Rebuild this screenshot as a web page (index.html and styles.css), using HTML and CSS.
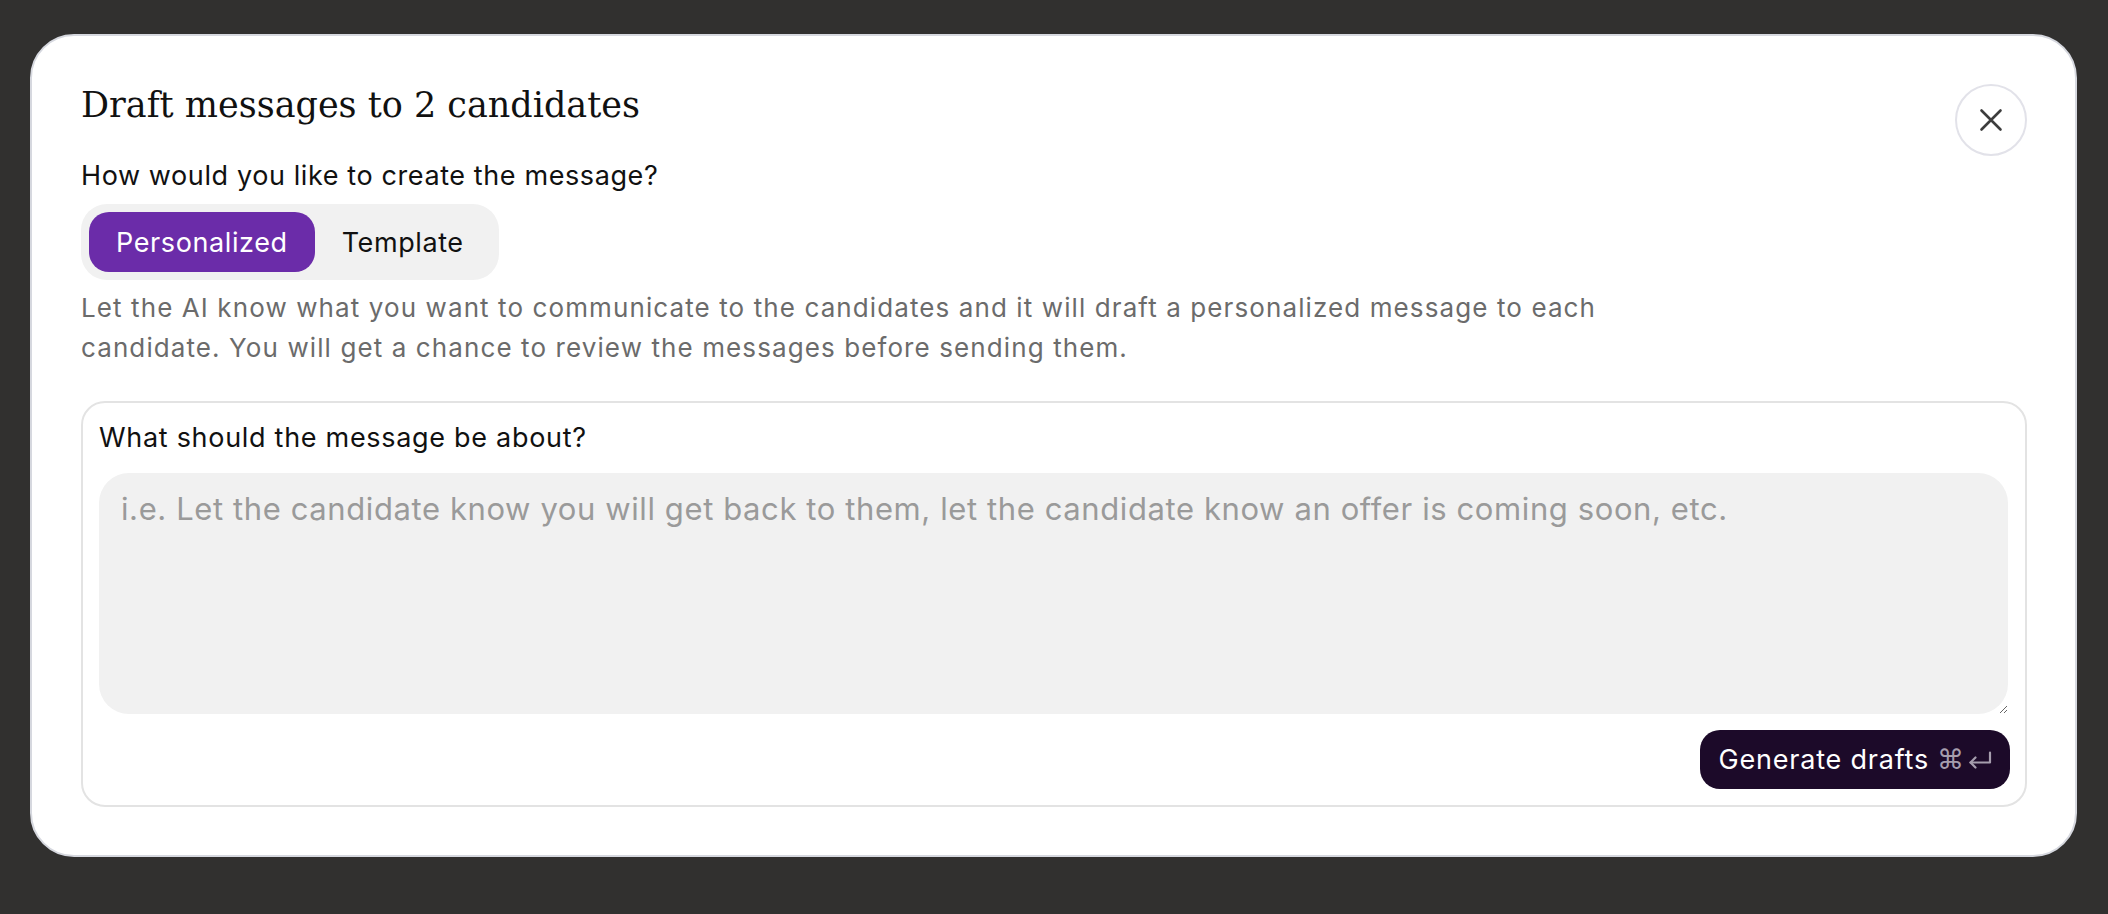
FILE: index.html
```html
<!DOCTYPE html>
<html lang="en">
<head>
<meta charset="utf-8">
<title>Draft messages</title>
<link rel="stylesheet" href="styles.css">
</head>
<body>
<div class="overlay">
  <div class="modal">
    <div class="header">
      <h1 class="title">Draft messages to 2 candidates</h1>
      <button class="close" aria-label="Close">
        <svg width="24" height="24" viewBox="0 0 24 24" fill="none" stroke="#3d3d3d" stroke-width="2.6" stroke-linecap="round"><path d="M2.5 2.5 L21.5 21.5 M21.5 2.5 L2.5 21.5"/></svg>
      </button>
    </div>
    <p class="question">How would you like to create the message?</p>
    <div class="segmented">
      <button class="seg active">Personalized</button>
      <button class="seg">Template</button>
    </div>
    <p class="desc">Let the AI know what you want to communicate to the candidates and it will draft a personalized message to each candidate. You will get a chance to review the messages before sending them.</p>
    <div class="card">
      <label class="card-label" for="about">What should the message be about?</label>
      <textarea id="about" class="input" placeholder="i.e. Let the candidate know you will get back to them, let the candidate know an offer is coming soon, etc."></textarea>
      <button class="generate">Generate drafts <span class="keys"><span class="cmd">⌘</span><svg width="24" height="18" viewBox="0 0 24 18" fill="none" stroke="#a59dad" stroke-width="2.2" stroke-linecap="round" stroke-linejoin="round"><path d="M22 1.5 V11.5 H2.5"/><path d="M7.5 6.5 L2.5 11.5 L7.5 16.5"/></svg></span></button>
    </div>
  </div>
</div>
</body>
</html>
```
FILE: styles.css
```css
* { box-sizing: border-box; }
html, body { margin: 0; padding: 0; }
body {
  background: #31302f;
  height: 914px;
  font-family: Inter, "Noto Sans", sans-serif;
  color: #111;
}
.overlay {
  padding: 34px 31px 0 30px;
}
.modal {
  background: #fff;
  border: 2px solid #d6d8df;
  border-radius: 44px;
  height: 823px;
  padding: 48px 48px 0 49px;
}
.header {
  display: flex;
  justify-content: space-between;
  align-items: flex-start;
}
.title {
  margin: 0;
  font-family: "DejaVu Serif", "Liberation Serif", serif;
  font-weight: 400;
  font-size: 35px;
  line-height: 42px;
  color: #111;
}
.close {
  width: 72px;
  height: 72px;
  border-radius: 50%;
  border: 2px solid #e2e2e9;
  background: #fff;
  display: flex;
  align-items: center;
  justify-content: center;
  padding: 0;
}
.question {
  margin: 4px 0 0;
  font-size: 27px;
  line-height: 32px;
  letter-spacing: 0.6px;
  color: #111;
}
.segmented {
  display: inline-flex;
  margin-top: 12px;
  padding: 8px;
  background: #f1f1f1;
  border-radius: 26px;
}
.seg {
  height: 60px;
  padding: 0 27px;
  border: none;
  border-radius: 20px;
  background: transparent;
  font-family: Inter, "Noto Sans", sans-serif;
  font-size: 27px;
  letter-spacing: 0.6px;
  color: #111;
}
.seg.active {
  background: #6b2ca9;
  color: #fff;
}
.desc {
  margin: 8px 0 0;
  max-width: 1570px;
  font-size: 26px;
  line-height: 40px;
  letter-spacing: 1.1px;
  color: #6b6b6b;
}
.card {
  margin-top: 33px;
  border: 2px solid #e3e3e3;
  border-radius: 24px;
  padding: 18px 17px 16px 16px;
  display: flex;
  flex-direction: column;
}
.card-label {
  font-size: 27px;
  line-height: 34px;
  letter-spacing: 0.7px;
  color: #111;
}
.input {
  margin-top: 18px;
  height: 241px;
  border: none;
  border-radius: 30px;
  background: #f1f1f1;
  padding: 18px 22px;
  font-family: Inter, "Noto Sans", sans-serif;
  font-size: 31px;
  line-height: 36px;
  letter-spacing: 0.6px;
  color: #111;
  resize: vertical;
  outline: none;
}
.input::placeholder {
  color: #9a9a9a;
}
.generate {
  align-self: flex-end;
  margin-top: 16px;
  margin-right: -2px;
  height: 59px;
  padding: 0 18px 0 18px;
  border: none;
  border-radius: 20px;
  background: #1c0a29;
  color: #fff;
  font-family: Inter, "Noto Sans", sans-serif;
  font-size: 27px;
  letter-spacing: 0.8px;
  display: inline-flex;
  align-items: center;
  gap: 8px;
}
.keys {
  display: inline-flex;
  align-items: center;
  gap: 4px;
  color: #a59dad;
  letter-spacing: 0;
}
.cmd {
  font-family: "DejaVu Sans", sans-serif;
  font-size: 27px;
  line-height: 1;
}
```
